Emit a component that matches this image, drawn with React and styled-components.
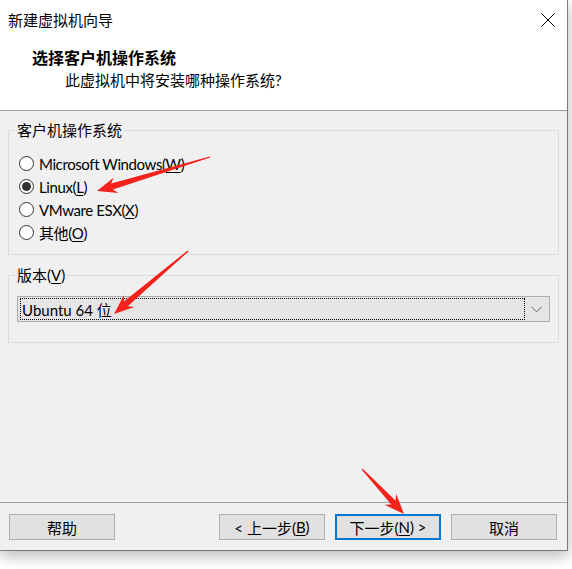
import React from "react"
import styled, { createGlobalStyle } from "styled-components"

const FONT = `Lato, "Noto Sans CJK SC", sans-serif`

const GlobalStyle = createGlobalStyle`
  html, body {
    margin: 0;
    padding: 0;
    background: #ffffff;
  }
  body {
    font-family: ${FONT};
    font-size: 15px;
    color: #000;
  }
`

const Screen = styled.div`
  position: relative;
  width: 572px;
  height: 569px;
  overflow: hidden;
  background: #ffffff;
`

const Window = styled.div`
  width: 568px;
  height: 551px;
  box-sizing: border-box;
  display: flex;
  flex-direction: column;
  background: #f0f0f0;
  border-right: 1px solid #7a7a7a;
  border-bottom: 1px solid #7a7a7a;
  box-shadow: 0 5px 14px rgba(0, 0, 0, 0.28);
`

const Top = styled.div`
  background: #ffffff;
  border-bottom: 1px solid #a0a0a0;
  height: 111px;
  box-sizing: border-box;
`

const TitleBar = styled.div`
  height: 40px;
  display: flex;
  align-items: center;
  justify-content: space-between;
  padding: 0 12px 0 8px;
`

const Title = styled.div`
  font-size: 15px;
  line-height: 20px;
`

const Close = styled.div`
  width: 14px;
  height: 14px;
  display: flex;
  svg {
    display: block;
  }
`

const Header = styled.div`
  padding-top: 7px;
`

const Heading = styled.div`
  padding-left: 32px;
  font-size: 16px;
  font-weight: bold;
  line-height: 22px;
`

const Sub = styled.div`
  padding-left: 65px;
  font-size: 15px;
  line-height: 22px;
`

const Body = styled.div`
  flex: 1;
  padding: 9px 8px 0 8px;
  display: flex;
  flex-direction: column;
  gap: 10px;
`

const Group = styled.fieldset`
  margin: 0;
  padding: 0 0 ${(p) => p.$pb}px;
  border: 1px solid #dcdcdc;
  min-width: 0;
`

const Legend = styled.legend`
  margin-left: 6px;
  padding: 0 2px;
  font-size: 15px;
  line-height: 20px;
`

const RadioList = styled.div`
  padding-top: 12px;
  display: flex;
  flex-direction: column;
`

const RadioRow = styled.label`
  height: 23px;
  display: flex;
  align-items: center;
  gap: 5px;
  padding-left: 10px;
  font-size: 15px;
  letter-spacing: -0.4px;
`

const Circle = styled.span`
  width: 15px;
  height: 15px;
  box-sizing: border-box;
  border-radius: 50%;
  border: 1px solid #333;
  background: #fff;
  display: flex;
  align-items: center;
  justify-content: center;
  &::after {
    content: "";
    width: 9px;
    height: 9px;
    border-radius: 50%;
    background: ${(p) => (p.$on ? "#333" : "transparent")};
  }
`

const Key = styled.span`
  text-decoration: underline;
  text-underline-offset: 2px;
`

const Select = styled.div`
  margin: 11px 8px 0 8px;
  height: 26px;
  box-sizing: border-box;
  border: 1px solid #adadad;
  background: #e5e5e5;
  display: flex;
  align-items: center;
  padding: 0 2px;
`

const SelectValue = styled.div`
  flex: 1;
  height: 20px;
  border: 1px dotted #000;
  display: flex;
  align-items: center;
  padding-left: 1px;
  font-size: 15px;
`

const Chevron = styled.div`
  width: 22px;
  display: flex;
  justify-content: center;
`

const Footer = styled.div`
  border-top: 1px solid #a0a0a0;
  padding: 11px 10px 10px 9px;
  display: flex;
  gap: 10px;
`

const Button = styled.div`
  width: 106px;
  height: 26px;
  box-sizing: border-box;
  border: ${(p) => (p.$primary ? "2px solid #0078d7" : "1px solid #adadad")};
  background: #e1e1e1;
  display: flex;
  align-items: center;
  justify-content: center;
  font-size: 15px;
  margin-right: ${(p) => (p.$push ? "auto" : "0")};
`

const Overlay = styled.svg`
  position: absolute;
  top: 0;
  left: 0;
  pointer-events: none;
`

function arrow(x1, y1, x2, y2, head = 20, wing = 8, neck = 3) {
  const dx = x2 - x1
  const dy = y2 - y1
  const len = Math.hypot(dx, dy)
  const ux = dx / len
  const uy = dy / len
  const nx = -uy
  const ny = ux
  const bx = x2 - ux * head
  const by = y2 - uy * head
  const kx = x2 - ux * head * 0.78
  const ky = y2 - uy * head * 0.78
  const pts = [
    [x1 + nx * 0.6, y1 + ny * 0.6],
    [kx + nx * neck, ky + ny * neck],
    [bx + nx * wing, by + ny * wing],
    [x2, y2],
    [bx - nx * wing, by - ny * wing],
    [kx - nx * neck, ky - ny * neck],
    [x1 - nx * 0.6, y1 - ny * 0.6],
  ]
  return pts.map((p) => p.map((v) => v.toFixed(1)).join(",")).join(" ")
}

const radios = [
  { label: "Microsoft Windows(", key: "W" },
  { label: "Linux(", key: "L", on: true },
  { label: "VMware ESX(", key: "X" },
  { label: "其他(", key: "O" },
]

export default function App() {
  return (
    <>
      <GlobalStyle />
      <Screen>
        <Window>
          <Top>
            <TitleBar>
              <Title>新建虚拟机向导</Title>
              <Close>
                <svg width="14" height="14" viewBox="0 0 14 14">
                  <path d="M0.5 0.5 L13.5 13.5 M13.5 0.5 L0.5 13.5" stroke="#000" strokeWidth="1" />
                </svg>
              </Close>
            </TitleBar>
            <Header>
              <Heading>选择客户机操作系统</Heading>
              <Sub>此虚拟机中将安装哪种操作系统?</Sub>
            </Header>
          </Top>
          <Body>
            <Group $pb={10}>
              <Legend>客户机操作系统</Legend>
              <RadioList>
                {radios.map((r) => (
                  <RadioRow key={r.key}>
                    <Circle $on={r.on} />
                    <span>
                      {r.label}
                      <Key>{r.key}</Key>)
                    </span>
                  </RadioRow>
                ))}
              </RadioList>
            </Group>
            <Group $pb={20}>
              <Legend>
                版本(<Key>V</Key>)
              </Legend>
              <Select>
                <SelectValue>Ubuntu 64 位</SelectValue>
                <Chevron>
                  <svg width="11" height="7" viewBox="0 0 11 7">
                    <path d="M0.5 0.8 L5.5 5.8 L10.5 0.8" fill="none" stroke="#606060" strokeWidth="1" />
                  </svg>
                </Chevron>
              </Select>
            </Group>
          </Body>
          <Footer>
            <Button $push>帮助</Button>
            <Button>
              &lt; 上一步(<Key>B</Key>)
            </Button>
            <Button $primary>
              下一步(<Key>N</Key>) &gt;
            </Button>
            <Button>取消</Button>
          </Footer>
        </Window>
        <Overlay width="572" height="569" viewBox="0 0 572 569">
          <polygon points={arrow(210, 157, 97, 191)} fill="#f5221b" />
          <polygon points={arrow(188, 251, 114, 314)} fill="#f5221b" />
          <polygon points={arrow(362, 469, 404, 514)} fill="#f5221b" />
        </Overlay>
      </Screen>
    </>
  )
}
